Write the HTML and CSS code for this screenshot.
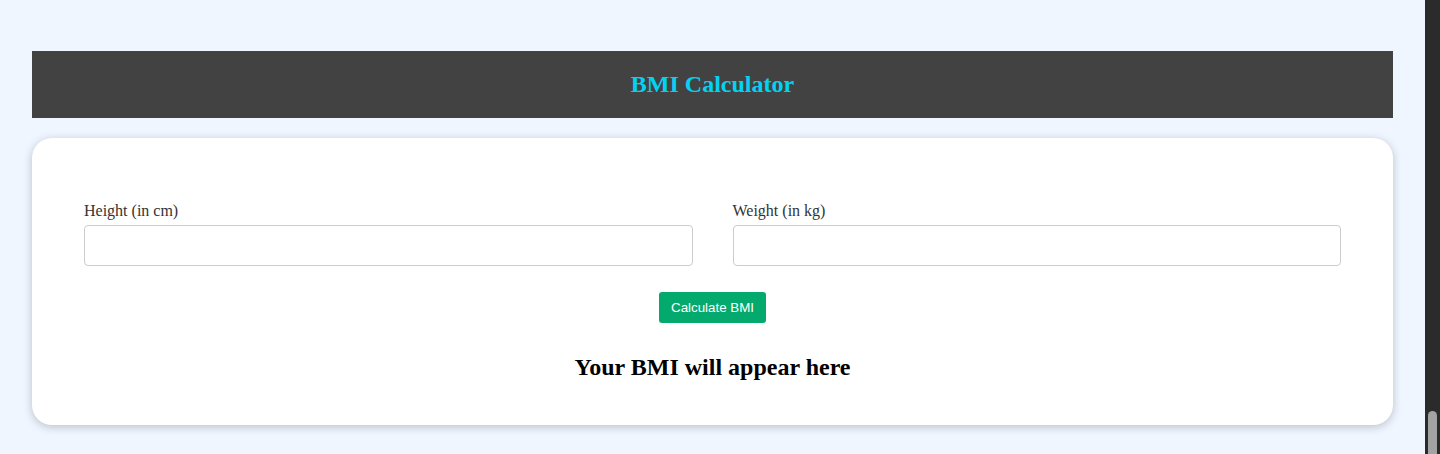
FILE: index.html
```html
<!DOCTYPE html>
<html lang="en">
<head>
<meta charset="utf-8">
<title>BMI Calculator</title>
<link rel="stylesheet" href="styles.css">
</head>
<body>
  <main class="page">
    <header class="banner">
      <h1 class="banner-title">BMI Calculator</h1>
    </header>
    <section class="card">
      <div class="fields">
        <div class="field">
          <label class="field-label" for="height">Height (in cm)</label>
          <input class="field-input" id="height" type="text">
        </div>
        <div class="field">
          <label class="field-label" for="weight">Weight (in kg)</label>
          <input class="field-input" id="weight" type="text">
        </div>
      </div>
      <div class="actions">
        <button class="calc-btn" type="button">Calculate BMI</button>
      </div>
      <h2 class="result">Your BMI will appear here</h2>
    </section>
  </main>
  <div class="scrollbar" aria-hidden="true"><div class="scrollbar-thumb"></div></div>
</body>
</html>
```
FILE: styles.css
```css
html {
  background: #eff6ff;
}
body {
  margin: 0;
  background: #eff6ff;
  color: #000;
  font-family: "Liberation Serif", "Times New Roman", serif;
}
.page {
  padding: 51px 47px 29px 32px;
}
.banner {
  background: #424242;
  padding: 20px 0 20px;
  text-align: center;
}
.banner-title {
  margin: 0;
  font-size: 24px;
  font-weight: bold;
  color: #05d2f2;
}
.card {
  margin-top: 20px;
  background: #fff;
  border-radius: 20px;
  box-shadow: 0 2px 10px rgba(0, 0, 0, 0.22);
  padding: 64px 52px 44px;
}
.fields {
  display: grid;
  grid-template-columns: 1fr 1fr;
  column-gap: 40px;
}
.field {
  display: flex;
  flex-direction: column;
}
.field-label {
  font-size: 16px;
  color: #333;
  margin-bottom: 5px;
}
.field-input {
  box-sizing: border-box;
  height: 41px;
  border: 1px solid #ccc;
  border-radius: 4px;
  background: #fff;
  color: #000;
  padding: 0 10px;
  font-size: 16px;
}
.actions {
  display: flex;
  justify-content: center;
  margin-top: 26px;
}
.calc-btn {
  box-sizing: border-box;
  height: 31px;
  padding: 0 12px;
  border: none;
  border-radius: 3px;
  background: #04aa6d;
  color: #fff;
  font-family: "Liberation Sans", Arial, sans-serif;
  font-size: 13.33px;
}
.result {
  margin: 31px 0 0;
  text-align: center;
  font-size: 24px;
  font-weight: bold;
  color: #000;
}
.scrollbar {
  position: fixed;
  top: 0;
  right: 0;
  bottom: 0;
  width: 15px;
  background: #2b2b2b;
  display: flex;
  flex-direction: column;
  justify-content: flex-end;
  align-items: center;
}
.scrollbar-thumb {
  width: 9px;
  height: 43px;
  background: #a3a3a3;
  border-radius: 5px 5px 0 0;
}
```
